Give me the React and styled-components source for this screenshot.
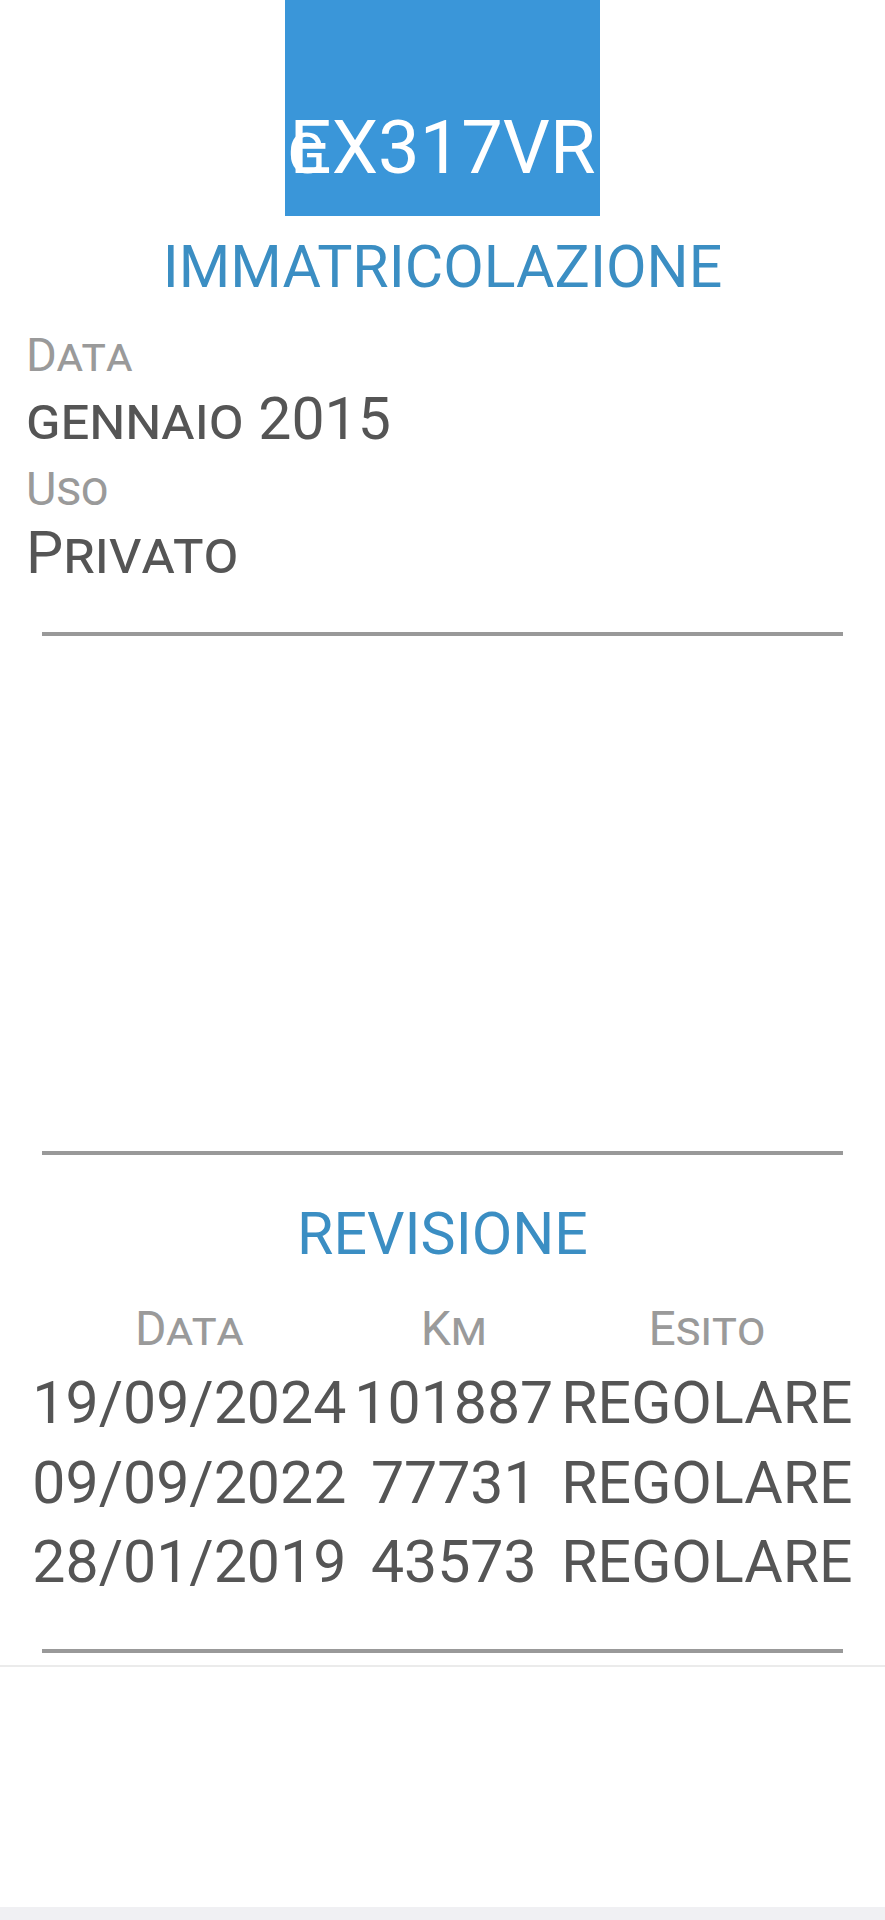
import React from 'react';
import styled, {createGlobalStyle} from 'styled-components';

const GlobalStyle = createGlobalStyle`
    body {
        margin: 0;
        background: #ffffff;
        font-family: Roboto, "Liberation Sans", sans-serif;
    }
`;

const revisions = [
    {date: '19/09/2024', km: '101887', esito: 'REGOLARE'},
    {date: '09/09/2022', km: '77731', esito: 'REGOLARE'},
    {date: '28/01/2019', km: '43573', esito: 'REGOLARE'},
];

export default function App() {
    return (
        <Page>
            <GlobalStyle/>
            <Plate>
                <PlateNumber>
                    <PlateMark>G</PlateMark>EX317VR
                </PlateNumber>
            </Plate>

            <SectionTitle $top={15}>IMMATRICOLAZIONE</SectionTitle>
            <Details>
                <Field>
                    <Label>Data</Label>
                    <Value>gennaio 2015</Value>
                </Field>
                <Field>
                    <Label>Uso</Label>
                    <Value>Privato</Value>
                </Field>
            </Details>
            <Divider $top={46}/>

            <MapSlot/>
            <Divider $top={0}/>

            <SectionTitle $top={43}>REVISIONE</SectionTitle>
            <RevisionTable>
                <HeadCell>Data</HeadCell>
                <HeadCell>Km</HeadCell>
                <HeadCell>Esito</HeadCell>
                {revisions.map(r => (
                    <React.Fragment key={r.date}>
                        <Cell>{r.date}</Cell>
                        <Cell>{r.km}</Cell>
                        <Cell>{r.esito}</Cell>
                    </React.Fragment>
                ))}
            </RevisionTable>
            <Divider $top={47}/>

            <Footer/>
            <BottomBar/>
        </Page>
    );
}

const Page = styled.div`
    width: 885px;
    display: flex;
    flex-direction: column;
`;

const Plate = styled.div`
    width: 315px;
    height: 216px;
    margin: 0 auto;
    box-sizing: border-box;
    padding-bottom: 25px;
    background: #3a96d9;
    display: flex;
    align-items: flex-end;
    justify-content: center;
`;

const PlateNumber = styled.div`
    color: #ffffff;
    font-size: 74px;
    line-height: 74px;
    white-space: nowrap;
    margin-left: -2px;
`;

const PlateMark = styled.span`
    font-size: 56px;
    margin-right: -36px;
`;

const SectionTitle = styled.h2`
    margin: ${p => p.$top}px 0 0;
    font-size: 59px;
    font-weight: 400;
    line-height: 71px;
    color: #3b8ec3;
    text-align: center;
`;

const Details = styled.div`
    margin-top: 25px;
    padding: 0 26px;
    display: flex;
    flex-direction: column;
    gap: 9px;
`;

const Field = styled.div`
    display: flex;
    flex-direction: column;
    gap: 2px;
`;

const Label = styled.div`
    font-size: 47px;
    line-height: 56px;
    color: #9a9a9a;
    font-variant: small-caps;
`;

const Value = styled.div`
    font-size: 59px;
    line-height: 66px;
    margin-top: 1px;
    color: #555555;
    font-variant: small-caps;
`;

const Divider = styled.div`
    margin: ${p => p.$top}px 42px 0;
    height: 4px;
    background: #999999;
`;

const MapSlot = styled.div`
    height: 515px;
`;

const RevisionTable = styled.div`
    margin-top: 32px;
    display: grid;
    grid-template-columns: repeat(3, auto);
    justify-content: center;
    column-gap: 8px;
    text-align: center;
`;

const HeadCell = styled.div`
    font-size: 48px;
    line-height: 56px;
    color: #9a9a9a;
    font-variant: small-caps;
    margin-bottom: 6px;
`;

const Cell = styled.div`
    font-size: 59px;
    line-height: 79.5px;
    color: #555555;
    white-space: nowrap;
`;

const Footer = styled.div`
    margin-top: 12px;
    height: 240px;
    border-top: 2px solid #ebebeb;
`;

const BottomBar = styled.div`
    height: 14px;
    background: #f0f0f3;
`;
